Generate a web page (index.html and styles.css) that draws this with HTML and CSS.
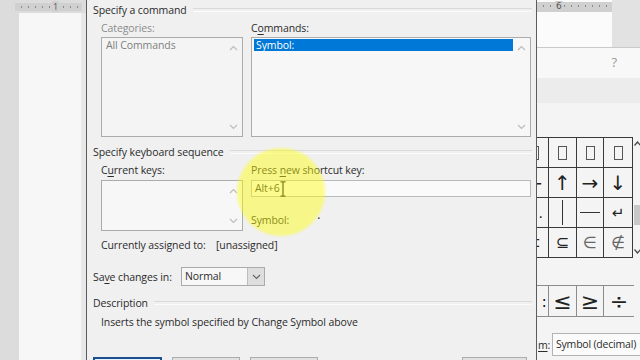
FILE: index.html
```html
<!DOCTYPE html>
<html lang="en">
<head>
    <meta charset="UTF-8">
    <title>Customize Keyboard</title>
    <link rel="stylesheet" href="styles.css">
</head>
<body>
<div class="screen">

    <!-- Word document behind, left -->
    <div class="word-left">
        <div class="ruler ruler-left"><div class="bar"><span class="num num-1">1</span></div></div>
        <div class="page-row">
            <div class="page"></div>
            <div class="edge"></div>
        </div>
    </div>

    <!-- Customize Keyboard dialog -->
    <div class="dialog">
        <div class="group-head">Specify a command</div>
        <div class="cmd-row">
            <div class="col-left">
                <div class="label disabled">Categories:</div>
                <div class="listbox tall cat">
                    <div class="items"><div class="item">All Commands</div></div>
                    <div class="scroll">
                        <svg width="9" height="6" viewBox="0 0 9 6"><path d="M1 5 L4.5 1.5 L8 5" fill="none" stroke="#bdbdbd" stroke-width="1.2"/></svg>
                        <svg width="9" height="6" viewBox="0 0 9 6"><path d="M1 1 L4.5 4.5 L8 1" fill="none" stroke="#bdbdbd" stroke-width="1.2"/></svg>
                    </div>
                </div>
            </div>
            <div class="col-right">
                <div class="label">C<u>o</u>mmands:</div>
                <div class="listbox tall">
                    <div class="items"><div class="item selected">Symbol:</div></div>
                    <div class="scroll">
                        <svg width="9" height="6" viewBox="0 0 9 6"><path d="M1 5 L4.5 1.5 L8 5" fill="none" stroke="#bdbdbd" stroke-width="1.2"/></svg>
                        <svg width="9" height="6" viewBox="0 0 9 6"><path d="M1 1 L4.5 4.5 L8 1" fill="none" stroke="#bdbdbd" stroke-width="1.2"/></svg>
                    </div>
                </div>
            </div>
        </div>

        <div class="group-head second">Specify keyboard sequence</div>
        <div class="key-row">
            <div class="col-left">
                <div class="label">C<u>u</u>rrent keys:</div>
                <div class="listbox short">
                    <div class="items"></div>
                    <div class="scroll">
                        <svg width="9" height="6" viewBox="0 0 9 6"><path d="M1 5 L4.5 1.5 L8 5" fill="none" stroke="#bdbdbd" stroke-width="1.2"/></svg>
                        <svg width="9" height="6" viewBox="0 0 9 6"><path d="M1 1 L4.5 4.5 L8 1" fill="none" stroke="#bdbdbd" stroke-width="1.2"/></svg>
                    </div>
                </div>
            </div>
            <div class="col-right">
                <div class="label">Press <u>n</u>ew shortcut key:</div>
                <div class="textbox">Alt+6<svg class="ibeam" width="6" height="16" viewBox="0 0 6 16"><path d="M0.5 0.8 H5.5 M3 0.8 V15.2 M0.5 15.2 H5.5" fill="none" stroke="#222" stroke-width="1.3"/></svg></div>
                <div class="symbol-line">Symbol:<span class="dot">•</span></div>
            </div>
        </div>

        <div class="assigned"><span class="assigned-label">Currently assigned to:</span>[unassigned]</div>

        <div class="save-row">
            <span class="save-label">Sa<u>v</u>e changes in:</span>
            <div class="dropdown">
                <span class="value">Normal</span>
                <span class="drop-btn"><svg width="9" height="6" viewBox="0 0 9 6"><path d="M1 1 L4.5 4.5 L8 1" fill="none" stroke="#666" stroke-width="1.2"/></svg></span>
            </div>
        </div>

        <div class="group-head third">Description</div>
        <div class="desc">Inserts the symbol specified by Change Symbol above</div>

        <div class="buttons">
            <div class="btn primary"></div>
            <div class="btn"></div>
            <div class="btn"></div>
            <div class="btn last"></div>
        </div>
    </div>

    <!-- Symbol dialog behind, right -->
    <div class="symbol-side">
        <div class="doc-top">
            <div class="doc-page">
                <div class="ruler"><div class="bar"><span class="num num-6">6</span></div></div>
            </div>
            <div class="doc-gray"></div>
        </div>
        <div class="help-band">?</div>
        <div class="tab-band"></div>

        <div class="grid-wrap">
            <div class="sym-grid">
                <div class="cell part"><span class="g"><span class="box"></span></span></div>
                <div class="cell"><span class="box"></span></div>
                <div class="cell"><span class="box"></span></div>
                <div class="cell"><span class="box"></span></div>

                <div class="cell part"><span class="g arrow">←</span></div>
                <div class="cell arrow">↑</div>
                <div class="cell arrow">→</div>
                <div class="cell arrow">↓</div>

                <div class="cell part"><span class="g dotcell">.</span></div>
                <div class="cell"><span class="vline"></span></div>
                <div class="cell"><span class="hline"></span></div>
                <div class="cell arrow small">↵</div>

                <div class="cell part"><span class="g setop">⊂</span></div>
                <div class="cell setop">⊆</div>
                <div class="cell setop light">∈</div>
                <div class="cell setop light">∉</div>
            </div>
            <div class="vscroll">
                <svg width="7" height="5" viewBox="0 0 7 5"><path d="M0.5 4.5 L3.5 1 L6.5 4.5" fill="none" stroke="#444" stroke-width="1.2"/></svg>
                <div class="thumb"></div>
                <svg width="7" height="5" viewBox="0 0 7 5"><path d="M0.5 0.5 L3.5 4 L6.5 0.5" fill="none" stroke="#444" stroke-width="1.2"/></svg>
            </div>
        </div>

        <div class="recent">
            <div class="cell part"><span class="g colon">:</span></div>
            <div class="cell big">≤</div>
            <div class="cell big">≥</div>
            <div class="cell big">÷</div>
        </div>

        <div class="from-row">
            <span class="from-label"><u>m</u>:</span>
            <div class="from-box">Symbol (decimal)</div>
        </div>
    </div>

    <!-- cursor highlight -->
    <div class="spot"></div>
</div>
</body>
</html>
```

FILE: styles.css
```css
/* General */
* {
    box-sizing: border-box;
}

body {
    margin: 0;
    font-family: "Open Sans", "Noto Sans", sans-serif;
    font-size: 10.5px;
    letter-spacing: -0.1px;
    color: #2b2b2b;
    background-color: #dcdcdc;
    overflow: hidden;
}

u {
    text-decoration-thickness: 1px;
    text-underline-offset: 2px;
}

.screen {
    display: flex;
    width: 640px;
    height: 360px;
    overflow: hidden;
    position: relative;
}

/* Rulers */
.ruler {
    height: 13px;
    padding-top: 3px;
    padding-bottom: 2px;
}

.ruler .bar {
    height: 8px;
    background-color: #d0d0d0;
    background-image: repeating-linear-gradient(90deg, transparent 0 6px, #8a8a8a 6px 7px);
    background-size: 100% 2px;
    background-position: 0 3px;
    background-repeat: no-repeat;
    position: relative;
}

.num {
    position: absolute;
    top: -2px;
    font-size: 9px;
    line-height: 11px;
    color: #555;
    background-color: #d0d0d0;
    padding: 0 1px;
}

/* Word, left */
.word-left {
    width: 86px;
    flex: none;
    display: flex;
    flex-direction: column;
    background-color: #dcdcdc;
}

.ruler-left {
    padding-left: 15px;
    padding-right: 4px;
}

.num-1 {
    left: 37px;
}

.page-row {
    flex: 1;
    display: flex;
}

.page {
    margin-left: 19px;
    width: 62px;
    background-color: #f7f7f7;
}

.edge {
    flex: 1;
    background-color: #e8e8e8;
}

/* Dialog */
.dialog {
    width: 451px;
    flex: none;
    background-color: #f0f0f0;
    border-left: 1px solid #5c5c5c;
    border-right: 1px solid #5c5c5c;
    padding: 0 4px 0 6px;
    display: flex;
    flex-direction: column;
}

.dialog > * {
    flex: none;
}

.group-head {
    display: flex;
    align-items: center;
    gap: 6px;
    height: 20px;
    white-space: nowrap;
}

.group-head::after {
    content: "";
    flex: 1;
    height: 2px;
    border-top: 1px solid #dadada;
    border-bottom: 1px solid #fbfbfb;
}

.group-head.second {
    margin-top: 6px;
    height: 18px;
}

.group-head.third {
    margin-top: 8px;
    height: 18px;
}

.cmd-row,
.key-row {
    display: flex;
    gap: 8px;
    padding-left: 8px;
}

.key-row {
    margin-top: 1px;
}

.col-left {
    width: 142px;
}

.col-right {
    width: 280px;
}

.label {
    height: 16px;
    line-height: 16px;
    margin-bottom: 1px;
}

.key-row .label {
    margin-bottom: 2px;
}

.disabled {
    color: #8d8d8d;
}

.listbox {
    border: 1px solid #acacac;
    background-color: #f7f7f7;
    display: flex;
}

.listbox.tall {
    height: 100px;
}

.listbox.short {
    height: 51px;
}

.listbox.cat {
    background-color: #f4f4f4;
}

.listbox .items {
    flex: 1;
    padding: 1px 0 0 2px;
}

.listbox .scroll {
    width: 17px;
    display: flex;
    flex-direction: column;
    justify-content: space-between;
    align-items: center;
    padding: 7px 0 6px;
}

.item {
    height: 12px;
    line-height: 12px;
    padding-left: 2px;
}

.cat .item {
    color: #7f7f7f;
}

.item.selected {
    background-color: #0078d7;
    color: #fff;
}

.textbox {
    height: 17px;
    line-height: 15px;
    border: 1px solid #b9b9b9;
    background-color: #fafafa;
    padding-left: 3px;
    display: flex;
    align-items: center;
}

.symbol-line {
    margin-top: 13px;
    height: 16px;
    line-height: 16px;
}

.dot {
    margin-left: 28px;
    font-size: 8px;
    vertical-align: 3px;
    color: #555;
}

.assigned {
    margin-top: 6px;
    padding-left: 8px;
    height: 16px;
    line-height: 16px;
}

.assigned-label {
    display: inline-block;
    width: 115px;
}

.save-row {
    margin-top: 14px;
    height: 19px;
    display: flex;
    align-items: center;
}

.save-label {
    width: 88px;
}

.dropdown {
    width: 84px;
    height: 19px;
    border: 1px solid #aaaaaa;
    background-color: #f7f7f7;
    display: flex;
}

.dropdown .value {
    flex: 1;
    padding-left: 3px;
    line-height: 17px;
}

.drop-btn {
    width: 17px;
    border-left: 1px solid #bdbdbd;
    background-color: #dedede;
    display: flex;
    align-items: center;
    justify-content: center;
}

.desc {
    margin-top: 2px;
    padding-left: 8px;
    height: 16px;
    line-height: 16px;
}

.buttons {
    margin-top: 27px;
    display: flex;
    gap: 10px;
}

.btn {
    width: 68px;
    height: 22px;
    border: 1px solid #adadad;
    background-color: #e1e1e1;
}

.btn.primary {
    width: 69px;
    border: 2px solid #1b4f91;
    background-color: #e5f1fb;
}

.btn.last {
    width: 65px;
    margin-left: 134px;
}

/* Symbol dialog, right */
.symbol-side {
    flex: 1;
    display: flex;
    flex-direction: column;
    background-color: #f4f4f4;
    font-family: "DejaVu Sans", sans-serif;
    letter-spacing: 0;
}

.symbol-side > * {
    flex: none;
}

.doc-top {
    height: 48px;
    display: flex;
    border-bottom: 1px solid #cacaca;
}

.doc-page {
    width: 75px;
    background-color: #fbfbfb;
}

.doc-page .ruler {
    padding-top: 2px;
    height: 12px;
}

.doc-page .bar {
    height: 10px;
}

.num-6 {
    left: 18px;
    top: -1px;
}

.doc-gray {
    flex: 1;
    background-color: #e2e2e2;
}

.help-band {
    height: 30px;
    background-color: #f8f8f8;
    text-align: right;
    padding-right: 24px;
    line-height: 28px;
    font-family: "Open Sans", sans-serif;
    font-size: 13px;
    color: #9a9a9a;
}

.tab-band {
    height: 25px;
    background-color: #ececec;
}

.grid-wrap {
    margin-top: 34px;
    display: flex;
}

.sym-grid,
.recent {
    display: grid;
    grid-template-columns: 11px 27px 26px 28px;
    gap: 1px;
    padding: 1px 1px 1px 0;
    background-color: #3a3a3a;
}

.sym-grid {
    grid-template-rows: repeat(4, 29px);
}

.cell {
    background-color: #f4f4f4;
    display: flex;
    align-items: center;
    justify-content: center;
    overflow: hidden;
    color: #222;
}

.cell.part {
    justify-content: flex-end;
}

.cell .g {
    flex: none;
    width: 28px;
    display: flex;
    align-items: center;
    justify-content: center;
}

.box {
    width: 9px;
    height: 14px;
    border: 1px solid #555;
}

.arrow {
    font-size: 20px;
}

.arrow.small {
    font-size: 15px;
}

.dotcell {
    font-size: 14px;
    justify-content: flex-end !important;
    padding-right: 5px;
}

.vline {
    width: 1.5px;
    height: 25px;
    background-color: #333;
}

.hline {
    width: 20px;
    height: 1.5px;
    background-color: #333;
}

.setop {
    font-size: 16px;
}

.setop.light {
    color: #666;
}

.vscroll {
    width: 8px;
    height: 121px;
    display: flex;
    flex-direction: column;
    align-items: center;
    padding-top: 4px;
}

.vscroll .thumb {
    width: 7px;
    height: 20px;
    margin: 59px 0 24px;
    background-color: #c8c8c8;
}

.recent {
    margin-top: 27px;
    width: 97px;
    grid-template-columns: 11px 27px 26px 30px;
    grid-template-rows: 30px;
    background-color: #8c8c8c;
}

.big {
    font-size: 22px;
}

.colon {
    font-size: 16px;
    justify-content: flex-end !important;
    padding-right: 1px;
}

.from-row {
    margin-top: 16px;
    display: flex;
    align-items: center;
    font-family: "Open Sans", sans-serif;
    letter-spacing: -0.2px;
}

.from-label {
    width: 15px;
    padding-left: 1px;
}

.from-box {
    flex: 1;
    height: 23px;
    border: 1px solid #b3b3b3;
    border-right: none;
    background-color: #fbfbfb;
    line-height: 21px;
    padding-left: 3px;
    white-space: nowrap;
    overflow: hidden;
}

/* Cursor highlight, over the dialog */
.spot {
    position: absolute;
    left: 237px;
    top: 148px;
    width: 88px;
    height: 88px;
    border-radius: 50%;
    background-color: rgba(255, 255, 10, 0.45);
    filter: blur(1px);
}
```
